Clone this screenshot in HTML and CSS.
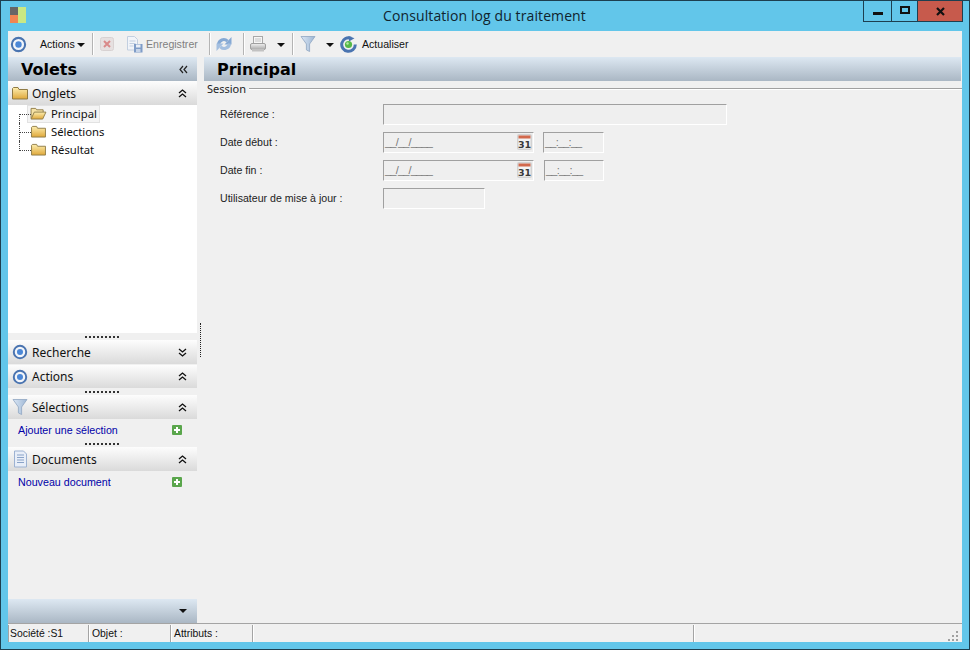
FILE: index.html
```html
<!DOCTYPE html>
<html lang="fr">
<head>
<meta charset="utf-8">
<title>Consultation log du traitement</title>
<link rel="stylesheet" href="styles.css">
</head>
<body>
<svg class="sprite" xmlns="http://www.w3.org/2000/svg">
  <defs>
    <linearGradient id="gFolder" x1="0" y1="0" x2="0" y2="1"><stop offset="0" stop-color="#fdeeb0"/><stop offset="1" stop-color="#dfa83a"/></linearGradient>
    <linearGradient id="gFunnel" x1="0" y1="0" x2="1" y2="0"><stop offset="0" stop-color="#dbe7f5"/><stop offset="1" stop-color="#9db6d4"/></linearGradient>
    <linearGradient id="gPrinter" x1="0" y1="0" x2="0" y2="1"><stop offset="0" stop-color="#f2f2f2"/><stop offset="1" stop-color="#a8a8a8"/></linearGradient>
    <symbol id="target" viewBox="0 0 18 18"><circle cx="9" cy="9" r="7" fill="#f2f5fa" stroke="#4a74b0" stroke-width="2.2"/><circle cx="9" cy="9" r="3.4" fill="#4b87d6"/></symbol>
    <symbol id="funnel" viewBox="0 0 16 18"><path d="M1 1.5h14L9.6 9v7.5l-3.2-1.6V9z" fill="url(#gFunnel)" stroke="#8fa6c2" stroke-width=".8"/></symbol>
    <symbol id="folder" viewBox="0 0 16 14"><path d="M.5 2.5V13h15V3.5H7L6 1.5H1.5z" fill="url(#gFolder)" stroke="#8f7b45"/></symbol>
    <symbol id="folderOpen" viewBox="0 0 17 14"><path d="M.5 12.5V1.5h5l1 1.5h7v2.5" fill="#f6e3a6" stroke="#8f7b45"/><path d="M.5 13H13l3.5-7.5H4z" fill="url(#gFolder)" stroke="#8f7b45"/></symbol>
    <symbol id="plus" viewBox="0 0 10 10"><rect width="10" height="10" rx="1" fill="#5aa64c"/><path d="M5 2v6M2 5h6" stroke="#fff" stroke-width="2"/></symbol>
    <symbol id="up2" viewBox="0 0 9 9"><path d="M1 4l3.5-3L8 4M1 8l3.5-3L8 8" fill="none" stroke="#111" stroke-width="1.3"/></symbol>
    <symbol id="down2" viewBox="0 0 9 9"><path d="M1 1l3.5 3L8 1M1 5l3.5 3L8 5" fill="none" stroke="#111" stroke-width="1.3"/></symbol>
    <symbol id="left2" viewBox="0 0 9 9"><path d="M4 1L1 4.5 4 8M8 1L5 4.5 8 8" fill="none" stroke="#222" stroke-width="1.2"/></symbol>
    <symbol id="cal" viewBox="0 0 15 16"><rect width="15" height="16" rx="2" fill="#d2d2d2"/><rect x="1.500" y="1.500" width="12" height="13" fill="#f4f4f4"/><rect x="1.500" y="1.500" width="12" height="3" fill="#d2694d"/><text x="7.500" y="13.600" text-anchor="middle" font-family="DejaVu Sans" font-weight="700" font-size="9.500" fill="#3a3a3a">31</text></symbol>
  </defs>
</svg>

<div class="window">
  <header class="titlebar">
    <div class="titlebar-left">
      <svg class="app-icon" viewBox="0 0 16 16"><rect width="8" height="8" fill="#666"/><rect y="8" width="8" height="8" fill="#f08552"/><rect x="8" width="8" height="16" fill="#c9e884"/></svg>
    </div>
    <div class="title">Consultation log du traitement</div>
    <div class="winbtns">
      <div class="winbtn btn-min"><span class="glyph-min"></span></div>
      <div class="winbtn btn-max"><span class="glyph-max"></span></div>
      <div class="winbtn btn-close"><svg class="glyph-x" viewBox="0 0 9 9"><path d="M1 1l7 7M8 1L1 8" stroke="#111" stroke-width="2.2"/></svg></div>
    </div>
  </header>

  <div class="client">
    <div class="toolbar">
      <svg class="ti i-target"><use href="#target"/></svg>
      <span class="tb-text tb-actions">Actions</span>
      <span class="caret caret-a"></span>
      <span class="tsep sep-1"></span>
      <svg class="ti i-del" viewBox="0 0 14 14"><rect x=".5" y=".5" width="13" height="13" rx="2" fill="#e6e0e0" stroke="#d8d2d2"/><path d="M4 4l6 6M10 4l-6 6" stroke="#d98a8a" stroke-width="2"/></svg>
      <svg class="ti i-save" viewBox="0 0 17 17"><path d="M1.500 .5h7l3 3V14h-10z" fill="#f1f4f9" stroke="#c2cfe0"/><path d="M3.500 5h6M3.500 7.500h6M3.500 10h4" stroke="#c2cfe0"/><rect x="8" y="8" width="8.500" height="8.500" fill="#7f9cc7"/><rect x="10" y="8.500" width="4.500" height="3" fill="#e9eef6"/><rect x="10" y="13" width="4.500" height="3" fill="#c6d4e8"/></svg>
      <span class="tb-text tb-disabled tb-save">Enregistrer</span>
      <span class="tsep sep-2"></span>
      <svg class="ti i-refresh" viewBox="0 0 16 16"><path d="M2.500 8.500C3 4 8 1.800 11.500 5.200" fill="none" stroke="#86a9d4" stroke-width="3.200"/><path d="M15.500 1v7.500H8.500z" fill="#86a9d4"/><path d="M13.500 7.500C13 12 8 14.200 4.500 10.800" fill="none" stroke="#a4bfe0" stroke-width="3.200"/><path d="M.5 15V7.500h7z" fill="#a4bfe0"/></svg>
      <span class="tsep sep-3"></span>
      <svg class="ti i-print" viewBox="0 0 16 16"><rect x="3.500" y=".5" width="9" height="7" fill="#f6f6f6" stroke="#a8a8a8"/><path d="M5 3h6M5 5h6" stroke="#c4c4c4"/><rect x=".5" y="7.500" width="15" height="6" rx="1.500" fill="url(#gPrinter)" stroke="#a0a0a0"/><rect x="2" y="13" width="12" height="2.500" fill="#c2c2c2"/></svg>
      <span class="caret caret-p"></span>
      <span class="tsep sep-4"></span>
      <svg class="ti i-funnel"><use href="#funnel"/></svg>
      <span class="caret caret-f"></span>
      <svg class="ti i-actu" viewBox="0 0 17 17"><path d="M11 2.200a6.800 6.800 0 1 0 4.300 6.300" fill="none" stroke="#4a74b0" stroke-width="3"/><path d="M8.500 0l6 2.200-5.500 3.300z" fill="#4a74b0"/><circle cx="8.500" cy="8.500" r="3.600" fill="#56b848"/><circle cx="7.500" cy="7.500" r="1.200" fill="#b6e8a8"/></svg>
      <span class="tb-text tb-actu">Actualiser</span>
    </div>

    <div class="main">
      <aside class="sidebar">
        <div class="panel-head blue-head">
          <span class="panel-big">Volets</span>
          <svg class="chev chev-left"><use href="#left2"/></svg>
        </div>
        <div class="section-head">
          <svg class="sec-icon sec-folder"><use href="#folder"/></svg>
          <span class="sec-title">Onglets</span>
          <svg class="chev"><use href="#up2"/></svg>
        </div>
        <div class="tree">
          <div class="tree-row selected-row">
            <span class="conn conn-mid"></span>
            <span class="tree-node selected">
              <svg class="node-icon"><use href="#folderOpen"/></svg>
              <span>Principal</span>
            </span>
          </div>
          <div class="tree-row">
            <span class="conn conn-mid"></span>
            <span class="tree-node">
              <svg class="node-icon"><use href="#folder"/></svg>
              <span>Sélections</span>
            </span>
          </div>
          <div class="tree-row">
            <span class="conn conn-last"></span>
            <span class="tree-node">
              <svg class="node-icon"><use href="#folder"/></svg>
              <span>Résultat</span>
            </span>
          </div>
        </div>
        <div class="hsplit"><span class="dots"></span></div>
        <div class="section-head">
          <svg class="sec-icon"><use href="#target"/></svg>
          <span class="sec-title">Recherche</span>
          <svg class="chev"><use href="#down2"/></svg>
        </div>
        <div class="section-head head-gap">
          <svg class="sec-icon"><use href="#target"/></svg>
          <span class="sec-title">Actions</span>
          <svg class="chev"><use href="#up2"/></svg>
        </div>
        <div class="hsplit"><span class="dots"></span></div>
        <div class="section-head">
          <svg class="sec-icon"><use href="#funnel"/></svg>
          <span class="sec-title">Sélections</span>
          <svg class="chev"><use href="#up2"/></svg>
        </div>
        <div class="link-row">
          <span class="link">Ajouter une sélection</span>
          <svg class="plus"><use href="#plus"/></svg>
        </div>
        <div class="hsplit"><span class="dots"></span></div>
        <div class="section-head">
          <svg class="sec-icon" viewBox="0 0 16 18"><path d="M2.500 1h9l3 3v13h-12z" fill="#e8eef8" stroke="#9db2d2"/><path d="M5 5h7M5 7.500h7M5 10h7M5 12.500h7" stroke="#8aa3c8"/></svg>
          <span class="sec-title">Documents</span>
          <svg class="chev"><use href="#up2"/></svg>
        </div>
        <div class="link-row">
          <span class="link link-doc">Nouveau document</span>
          <svg class="plus"><use href="#plus"/></svg>
        </div>
        <div class="side-fill"></div>
        <div class="side-foot"><span class="foot-caret"></span></div>
      </aside>

      <div class="vsplit"><span class="vdots"></span></div>

      <section class="content">
        <div class="panel-head blue-head content-head"><span class="panel-big">Principal</span></div>
        <div class="group-title"><span>Session</span><span class="group-line"></span></div>
        <div class="form">
          <div class="form-row">
            <label class="flabel">Référence :</label>
            <div class="field f-ref"></div>
          </div>
          <div class="form-row">
            <label class="flabel">Date début :</label>
            <div class="field f-date"><span class="mask">__/__/____</span><svg class="cal"><use href="#cal"/></svg></div>
            <div class="field f-time"><span class="mask">__:__:__</span></div>
          </div>
          <div class="form-row">
            <label class="flabel">Date fin :</label>
            <div class="field f-date"><span class="mask">__/__/____</span><svg class="cal"><use href="#cal"/></svg></div>
            <div class="field f-time f-time2"><span class="mask">__:__:__</span></div>
          </div>
          <div class="form-row">
            <label class="flabel">Utilisateur de mise à jour :</label>
            <div class="field f-user"></div>
          </div>
        </div>
      </section>
    </div>

    <footer class="statusbar">
      <div class="scell c1">Société :S1</div>
      <div class="scell c2">Objet :</div>
      <div class="scell c3">Attributs :</div>
      <div class="scell c4"></div>
      <div class="scell c5">
        <svg class="grip" viewBox="0 0 11 11"><path d="M9 1h2v2H9zM5 5h2v2H5zM9 5h2v2H9zM1 9h2v2H1zM5 9h2v2H5zM9 9h2v2H9z" fill="#a0a0a0"/></svg>
      </div>
    </footer>
  </div>
</div>
</body>
</html>
```

FILE: styles.css
```css
* { box-sizing: border-box; }
html, body { margin: 0; padding: 0; }
body { width: 970px; height: 650px; overflow: hidden; font-family: "Noto Sans", "Liberation Sans", sans-serif; font-size: 11px; color: #111; }
.sprite { position: absolute; width: 0; height: 0; }
svg { display: block; flex: none; }

.window { width: 970px; height: 650px; background: #62c6ea; border: 1px solid #1d3f50; padding: 0 7px 7px; display: flex; flex-direction: column; }

.titlebar { height: 30px; flex: none; margin: 0 -7px; padding: 0 6px 0 9px; display: grid; grid-template-columns: 1fr auto 1fr; }
.titlebar-left { display: flex; align-items: flex-start; padding-top: 6px; }
.app-icon { width: 16px; height: 16px; }
.title { font-size: 14px; line-height: 30px; color: #10242e; font-family: "Open Sans", "Noto Sans", sans-serif; letter-spacing: .1px; margin-right: 4px; }
.winbtns { display: flex; justify-content: flex-end; align-items: flex-start; }
.winbtn { height: 21px; border: 1px solid #1d3f50; border-top: 0; margin-left: -1px; display: flex; align-items: center; justify-content: center; }
.btn-min { width: 29px; }
.btn-max { width: 27px; }
.btn-close { width: 46px; background: #c75a4c; }
.glyph-min { width: 10px; height: 3px; background: #111; margin-top: 5px; }
.glyph-max { width: 10px; height: 8px; border: 2px solid #111; margin-top: -2px; }
.glyph-x { width: 9px; height: 9px; }

.client { flex: 1; background: #f0f0f0; display: flex; flex-direction: column; min-height: 0; }

.toolbar { height: 26px; flex: none; display: flex; align-items: center; padding-left: 2px; background: #f0f0f0; }
.ti { height: 17px; }
.i-target { width: 17px; }
.tb-text { line-height: 26px; white-space: nowrap; font-family: "Liberation Sans", sans-serif; font-size: 10.600px; }
.tb-actions { margin-left: 13px; width: 34px; }
.tb-disabled { color: #7f7f7f; }
.caret { width: 0; height: 0; border-left: 4px solid transparent; border-right: 4px solid transparent; border-top: 4px solid #111; margin-top: 1px; }
.caret-a { margin-left: 3px; }
.tsep { width: 1px; height: 22px; background: #b4b4b4; box-shadow: 1px 0 0 #fff; }
.sep-1 { margin-left: 7px; }
.i-del { width: 14px; height: 14px; margin-left: 7px; }
.i-save { width: 17px; margin-left: 12px; }
.tb-save { margin-left: 3px; width: 54px; }
.sep-2 { margin-left: 9px; }
.i-refresh { width: 16px; height: 16px; margin-left: 6px; }
.sep-3 { margin-left: 11px; }
.i-print { width: 16px; height: 16px; margin-left: 6px; }
.caret-p { margin-left: 11px; }
.sep-4 { margin-left: 7px; }
.i-funnel { width: 16px; height: 18px; margin-left: 7px; }
.caret-f { margin-left: 10px; }
.i-actu { width: 17px; margin-left: 6px; }
.tb-actu { margin-left: 5px; }

.main { flex: 1; display: flex; min-height: 0; }

.sidebar { width: 189px; flex: none; display: flex; flex-direction: column; }
.panel-head { height: 24px; flex: none; display: flex; align-items: center; }
.blue-head { background: linear-gradient(#dde8f2, #aab7c4); }
.panel-big { font-family: "DejaVu Sans", sans-serif; font-weight: 700; font-size: 16px; color: #000; }
.sidebar > .panel-head { padding-left: 13px; }
.chev { width: 9px; height: 9px; }
.chev-left { margin-left: auto; margin-right: 9px; }

.section-head { height: 24px; flex: none; display: flex; align-items: center; padding: 0 10px 0 4px; background: linear-gradient(#fdfdfd, #dadada); }
.head-gap { margin-top: 1px; height: 23px; }
.sec-icon { width: 16px; height: 18px; }
.sec-folder { height: 14px; }
.sec-title { font-size: 12px; margin-left: 4px; flex: 1; }

.tree { height: 228px; flex: none; background: #fff; padding-left: 11px; }
.tree-row { height: 18px; display: flex; align-items: center; }
.conn { width: 11px; flex: none; align-self: stretch; border-left: 1px dotted #444; position: relative; }
.conn-mid::after, .conn-last::after { content: ""; position: absolute; left: 0; top: 9px; width: 11px; border-top: 1px dotted #444; }
.conn-last { height: 10px; align-self: flex-start; }
.selected-row .conn { height: 9px; margin-top: 9px; align-self: flex-start; }
.selected-row .conn::after { top: 0; }
.tree-node { display: flex; align-items: center; height: 18px; padding: 0 2px 2px 2px; margin-left: -3px; border: 1px solid transparent; font-size: 11.300px; }
.selected { background: #f4f4f4; border-color: #e2e2e2; }
.node-icon { width: 17px; height: 13px; margin-right: 4px; }

.hsplit { height: 7px; flex: none; display: flex; justify-content: center; align-items: center; }
.dots { width: 35px; height: 2px; margin-left: -1px; background: repeating-linear-gradient(90deg, #333 0 2px, transparent 2px 4px); }

.link-row { height: 21px; flex: none; display: flex; align-items: center; padding: 0 15px 0 10px; justify-content: space-between; }
.link { color: #0000a8; font-family: "Liberation Sans", sans-serif; font-size: 10.700px; }
.plus { width: 10px; height: 10px; }

.side-fill { flex: 1; }
.side-foot { height: 24px; flex: none; background: linear-gradient(#dde8f2, #aab7c4); display: flex; align-items: center; justify-content: flex-end; padding-right: 10px; }
.foot-caret { width: 0; height: 0; border-left: 4px solid transparent; border-right: 4px solid transparent; border-top: 4px solid #111; }

.vsplit { width: 7px; flex: none; display: flex; align-items: center; justify-content: center; }
.vdots { height: 34px; width: 0; border-left: 1px dotted #222; }

.content { flex: 1; min-width: 0; display: flex; flex-direction: column; }
.content-head { margin-right: 1px; padding-left: 13px; }
.group-title { height: 15px; flex: none; display: flex; align-items: center; padding-left: 3px; font-size: 11px; color: #222; }
.group-line { flex: 1; height: 2px; margin-left: 3px; background: linear-gradient(#a0a0a0 50%, #fff 50%); }

.form { padding: 8px 0 0 16px; display: flex; flex-direction: column; gap: 8px; }
.form-row { height: 20px; display: flex; align-items: center; }
.flabel { width: 163px; flex: none; font-family: "Liberation Sans", sans-serif; font-size: 10.600px; color: #222; }
.field { height: 21px; display: flex; align-items: center; justify-content: space-between; border: 1px solid #fff; border-top-color: #a0a0a0; border-left-color: #a0a0a0; background: #efefef; }
.f-ref { width: 344px; }
.f-date { width: 151px; padding-right: 1px; }
.f-time { width: 61px; margin-left: 9px; }
.f-time2 { width: 60px; margin-left: 10px; }
.f-user { width: 102px; }
.mask { color: #777; font-family: "Liberation Sans", sans-serif; font-size: 11px; padding-left: 1px; letter-spacing: -.8px; }
.cal { width: 15px; height: 16px; }

.statusbar { height: 19px; flex: none; display: flex; border-top: 1px solid #a4a4a4; padding-top: 1px; }
.scell { border-right: 1px solid #a4a4a4; padding: 0 0 0 2px; line-height: 17px; font-family: "Liberation Sans", sans-serif; font-size: 10.400px; white-space: nowrap; border-left: 0; box-shadow: 1px 0 0 #fff; }
.c1 { width: 81px; padding-left: 1px; border-left: 1px solid #a4a4a4; }
.c2 { width: 82px; padding-left: 3px; }
.c3 { width: 82px; padding-left: 3px; }
.c4 { width: 441px; }
.c5 { flex: 1; border-right: 0; box-shadow: none; display: flex; justify-content: flex-end; align-items: flex-end; padding: 0 4px 1px 0; }
.grip { width: 11px; height: 11px; }
```
